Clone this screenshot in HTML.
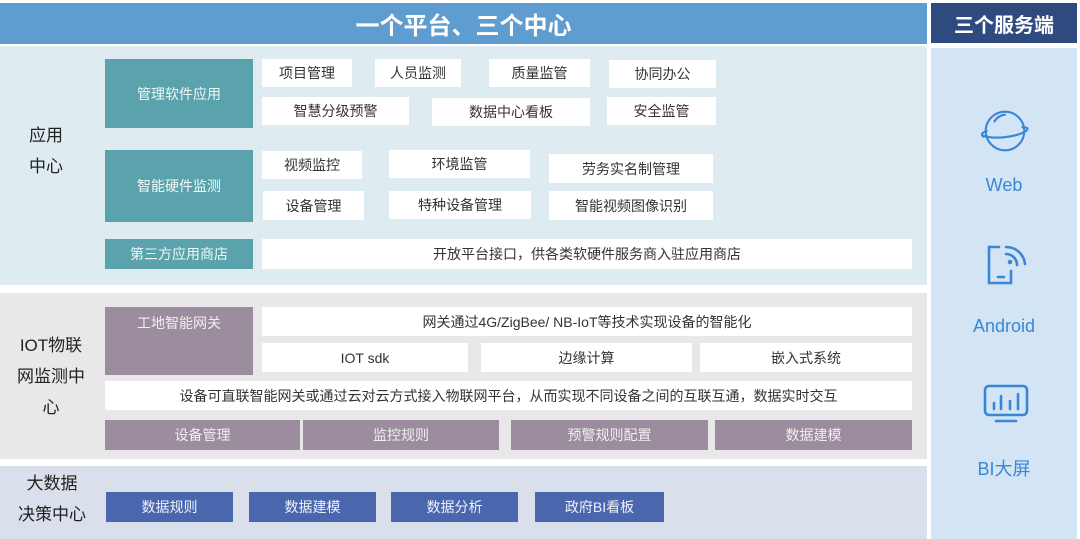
<!DOCTYPE html>
<html><head><meta charset="utf-8"><style>
*{margin:0;padding:0;box-sizing:border-box}
body{width:1080px;height:539px;background:#fff;position:relative;overflow:hidden;font-family:"Liberation Sans","Noto Sans CJK SC",sans-serif;color:#333}
div{position:absolute}
.b{background:#fff;display:flex;align-items:center;justify-content:center;font-size:14px;color:#333}
.t{background:#5ba3ac;color:#f2f7f8;display:flex;align-items:center;justify-content:center;font-size:14px}
.p{background:#9b8d9d;color:#f3eef3;display:flex;align-items:center;justify-content:center;font-size:14px}
.n{background:#4a66ad;color:#eef1fa;display:flex;align-items:center;justify-content:center;font-size:14px}
.lab{font-size:17px;color:#222;text-align:center;line-height:31px}
.ic{color:#3a86d6;font-size:18px;text-align:center;width:146px;left:931px}
</style></head><body>
<div style="left:0;top:3px;width:927px;height:41px;background:#5f9ccf;color:#fff;font-weight:bold;font-size:24px;display:flex;align-items:center;justify-content:center">一个平台、三个中心</div>
<div style="left:931px;top:3px;width:146px;height:40px;background:#2f4a7e;color:#fff;font-weight:bold;font-size:20px;display:flex;align-items:center;justify-content:center">三个服务端</div>
<div style="left:931px;top:48px;width:146px;height:491px;background:#d3e4f5"></div>

<div style="left:0;top:46px;width:927px;height:239px;background:#deebf0"></div>
<div style="left:0;top:293px;width:927px;height:166px;background:#e9e7ea"></div>
<div style="left:0;top:466px;width:927px;height:73px;background:#d9dfeb"></div>

<div class="lab" style="left:18px;top:120px;width:56px">应用<br>中心</div>
<div class="t" style="left:105px;top:59px;width:148px;height:69px">管理软件应用</div>
<div class="b" style="left:262px;top:59px;width:90px;height:28px">项目管理</div>
<div class="b" style="left:375px;top:59px;width:86px;height:28px">人员监测</div>
<div class="b" style="left:489px;top:59px;width:101px;height:28px">质量监管</div>
<div class="b" style="left:609px;top:60px;width:107px;height:28px">协同办公</div>
<div class="b" style="left:262px;top:97px;width:147px;height:28px">智慧分级预警</div>
<div class="b" style="left:432px;top:98px;width:158px;height:28px">数据中心看板</div>
<div class="b" style="left:607px;top:97px;width:109px;height:28px">安全监管</div>

<div class="t" style="left:105px;top:150px;width:148px;height:72px">智能硬件监测</div>
<div class="b" style="left:262px;top:151px;width:100px;height:28px">视频监控</div>
<div class="b" style="left:389px;top:150px;width:141px;height:28px">环境监管</div>
<div class="b" style="left:549px;top:154px;width:164px;height:29px">劳务实名制管理</div>
<div class="b" style="left:263px;top:191px;width:101px;height:29px">设备管理</div>
<div class="b" style="left:389px;top:191px;width:142px;height:28px">特种设备管理</div>
<div class="b" style="left:549px;top:191px;width:164px;height:29px">智能视频图像识别</div>

<div class="t" style="left:105px;top:239px;width:148px;height:30px">第三方应用商店</div>
<div class="b" style="left:262px;top:239px;width:650px;height:30px">开放平台接口，供各类软硬件服务商入驻应用商店</div>

<div class="lab" style="left:14px;top:330px;width:74px">IOT物联<br>网监测中<br>心</div>
<div class="p" style="left:105px;top:307px;width:148px;height:68px;align-items:flex-start;padding-top:6px">工地智能网关</div>
<div class="b" style="left:262px;top:307px;width:650px;height:29px">网关通过4G/ZigBee/ NB-IoT等技术实现设备的智能化</div>
<div class="b" style="left:262px;top:343px;width:206px;height:29px">IOT sdk</div>
<div class="b" style="left:481px;top:343px;width:211px;height:29px">边缘计算</div>
<div class="b" style="left:700px;top:343px;width:212px;height:29px">嵌入式系统</div>
<div class="b" style="left:105px;top:381px;width:807px;height:29px">设备可直联智能网关或通过云对云方式接入物联网平台，从而实现不同设备之间的互联互通，数据实时交互</div>
<div class="p" style="left:105px;top:420px;width:195px;height:30px">设备管理</div>
<div class="p" style="left:303px;top:420px;width:196px;height:30px">监控规则</div>
<div class="p" style="left:511px;top:420px;width:197px;height:30px">预警规则配置</div>
<div class="p" style="left:715px;top:420px;width:197px;height:30px">数据建模</div>

<div class="lab" style="left:14px;top:468px;width:76px">大数据<br>决策中心</div>
<div class="n" style="left:106px;top:492px;width:127px;height:30px">数据规则</div>
<div class="n" style="left:249px;top:492px;width:127px;height:30px">数据建模</div>
<div class="n" style="left:391px;top:492px;width:127px;height:30px">数据分析</div>
<div class="n" style="left:535px;top:492px;width:129px;height:30px">政府BI看板</div>

<svg style="position:absolute;left:978px;top:106px" width="54" height="50" viewBox="0 0 56 50" fill="none" stroke="#3a86d6" stroke-width="2.2" stroke-linecap="round">
<circle cx="28" cy="25" r="20"/>
<path d="M6 30 C18 34 40 31 50 25"/>
<path d="M9 25 Q1 28 6 31"/><path d="M46 21 Q54 21 50 25"/>
<path d="M17 15 Q21 9 28 8"/>
</svg>
<div class="ic" style="top:175px">Web</div>

<svg style="position:absolute;left:985px;top:244px" width="46" height="44" viewBox="0 0 46 44" fill="none" stroke="#3a86d6" stroke-width="2.6" stroke-linecap="round">
<path d="M14 3 H4 V39 H26 V27"/>
<path d="M13 33 H19"/>
<path d="M21 3 A19 19 0 0 1 40 20"/>
<path d="M21 10 A11 11 0 0 1 32 21"/>
<circle cx="25" cy="18" r="1" fill="#3a86d6"/>
</svg>
<div class="ic" style="top:316px">Android</div>

<svg style="position:absolute;left:982px;top:383px" width="48" height="42" viewBox="0 0 48 42" fill="none" stroke="#3a86d6" stroke-width="2.6" stroke-linecap="round">
<rect x="3" y="3" width="42" height="29" rx="4"/>
<path d="M14 38 H34"/>
<path d="M12 26 V20 M19 26 V13 M28 26 V18 M36 26 V11"/>
</svg>
<div class="ic" style="top:455px">BI大屏</div>
</body></html>
